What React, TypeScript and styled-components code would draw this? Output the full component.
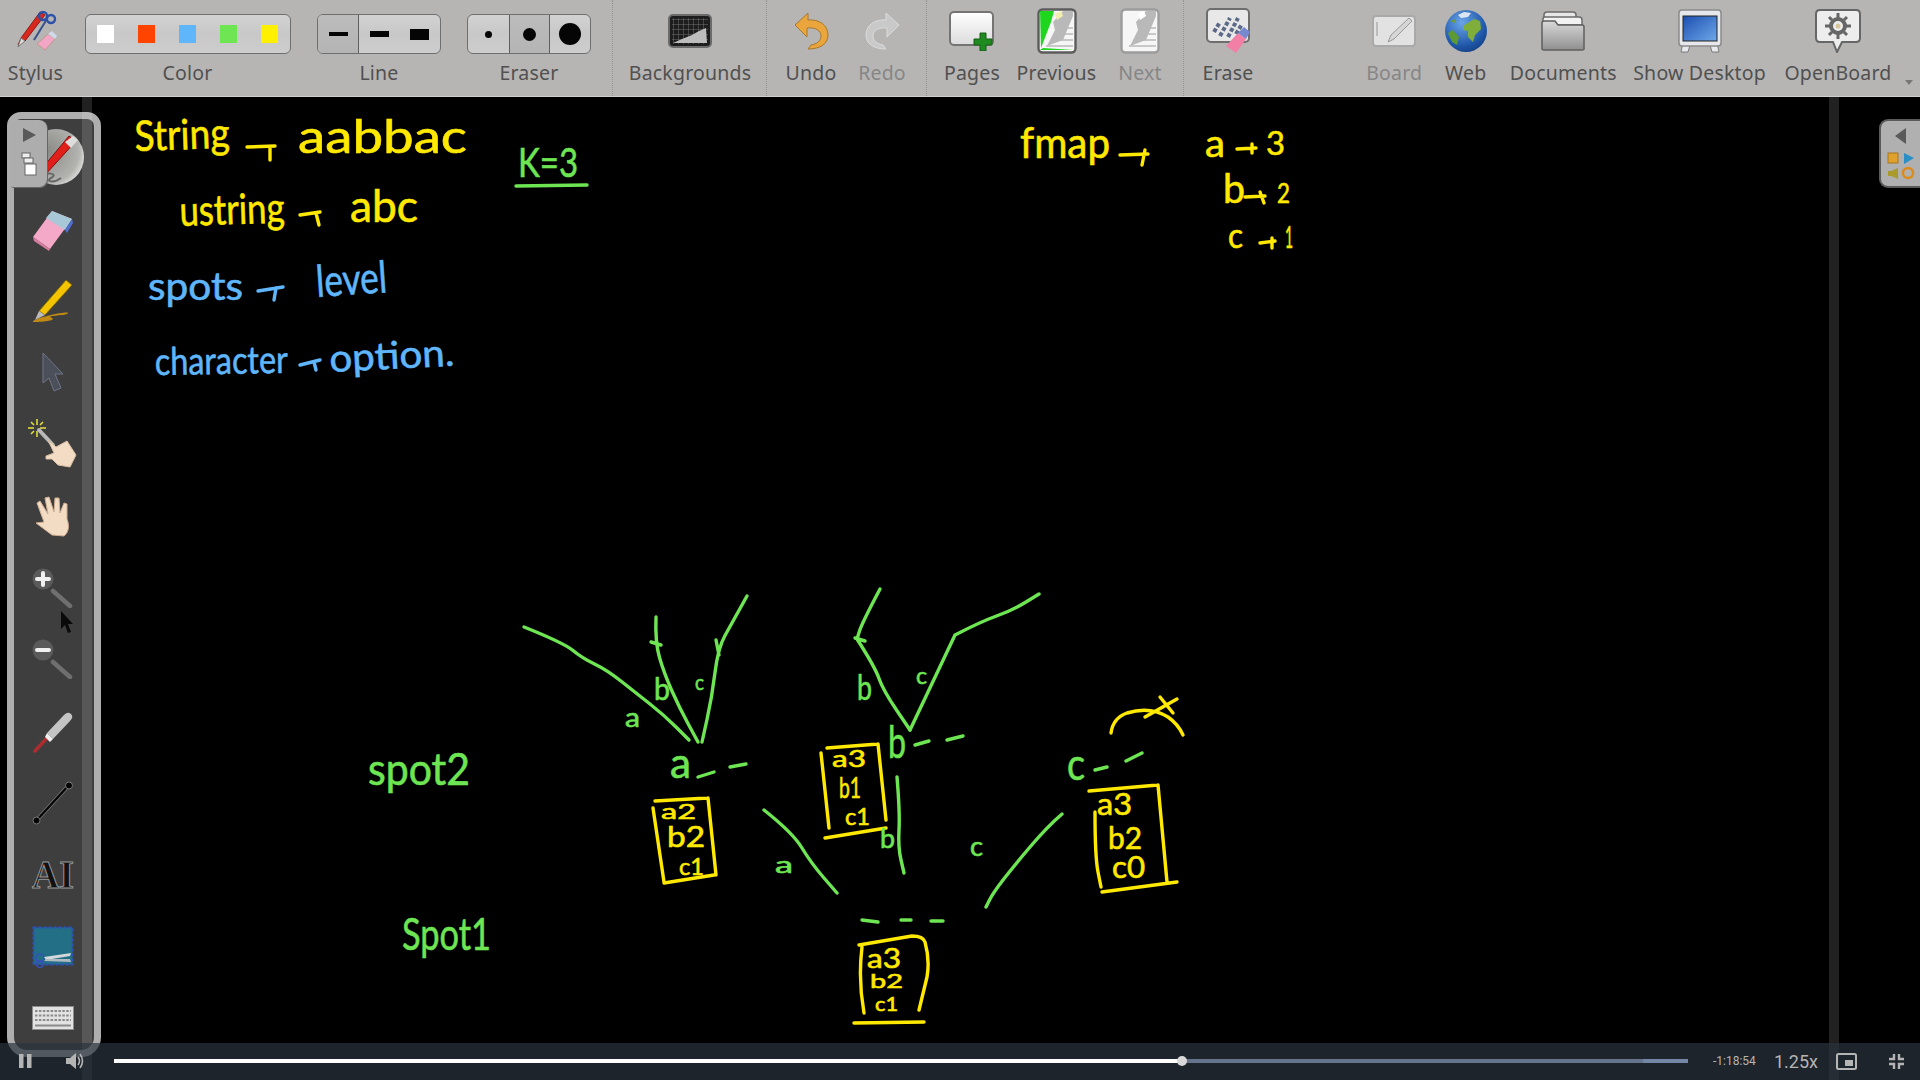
import React from "react";
import styled, { createGlobalStyle } from "styled-components";

const Y = "#ffe900";
const G = "#6ee553";
const B = "#5fb6fb";

const Global = createGlobalStyle`
  html, body { margin: 0; padding: 0; background: #000; overflow: hidden; }
  #root { width: 1920px; height: 1080px; }
`;

const Page = styled.div`
  position: relative;
  width: 1920px;
  height: 1080px;
  display: flex;
  flex-direction: column;
  background: #000;
  overflow: hidden;
  font-family: "Noto Sans", "Open Sans", sans-serif;
`;

/* ---------- toolbar ---------- */
const Toolbar = styled.header`
  position: relative;
  flex: 0 0 97px;
  box-sizing: border-box;
  height: 97px;
  display: flex;
  align-items: flex-start;
  background: #b6b5b4;
  border-bottom: 1px solid #cfcfcf;
`;
const Tool = styled.div<{ $w: number; $ml?: number }>`
  flex: 0 0 ${(p) => p.$w}px;
  margin-left: ${(p) => p.$ml ?? 0}px;
  display: flex;
  flex-direction: column;
  align-items: center;
`;
const IconSlot = styled.div`
  height: 62px;
  display: flex;
  align-items: center;
  justify-content: center;
`;
const Mirror = styled.span`
  display: flex;
  transform: scaleX(-1);
`;
const Label = styled.span<{ $off?: boolean }>`
  height: 22px;
  line-height: 22px;
  font-size: 19.5px;
  letter-spacing: 0.2px;
  white-space: nowrap;
  color: ${(p) => (p.$off ? "#868686" : "#505050")};
`;
const Sep = styled.div<{ $ml?: number }>`
  flex: 0 0 1px;
  height: 96px;
  margin-left: ${(p) => p.$ml ?? 0}px;
  border-left: 1px dotted #959595;
`;
const Spacer = styled.div<{ $w?: number }>`
  flex: ${(p) => (p.$w ? `0 0 ${p.$w}px` : "1")};
`;
const Group = styled.div`
  box-sizing: border-box;
  width: 100%;
  height: 40px;
  margin-top: 14px;
  margin-bottom: 8px;
  display: flex;
  border: 1.5px solid #6f6f6f;
  border-radius: 6px;
  overflow: hidden;
  background: linear-gradient(#d2d2d2, #c8c8c8 50%, #cdcdcd);
`;
const ColorCell = styled.div`
  flex: 1;
  display: flex;
  align-items: center;
  justify-content: center;
`;
const Swatch = styled.span<{ $c: string }>`
  width: 17px;
  height: 18px;
  background: ${(p) => p.$c};
`;
const Seg = styled.div<{ $w: number; $on?: boolean; $div?: boolean }>`
  flex: 0 0 ${(p) => p.$w}px;
  display: flex;
  align-items: center;
  justify-content: center;
  box-sizing: border-box;
  background: ${(p) => (p.$on ? "linear-gradient(#bcbcbc,#b4b4b4)" : "transparent")};
  border-left: ${(p) => (p.$div ? "1.5px solid #5f5f5f" : "none")};
`;
const LineMark = styled.span<{ $h: number }>`
  width: 19px;
  height: ${(p) => p.$h}px;
  background: #050505;
`;
const Dot = styled.span<{ $d: number }>`
  width: ${(p) => p.$d}px;
  height: ${(p) => p.$d}px;
  border-radius: 50%;
  background: #050505;
`;
const MoreArrow = styled.span`
  position: absolute;
  right: 7px;
  top: 80px;
  width: 0;
  height: 0;
  border-left: 4px solid transparent;
  border-right: 4px solid transparent;
  border-top: 5px solid #777;
`;

/* ---------- stage ---------- */
const Stage = styled.main`
  position: relative;
  flex: 1;
  display: flex;
  justify-content: space-between;
  align-items: flex-start;
`;
const Board = styled.svg`
  position: absolute;
  inset: 0;
  width: 1920px;
  height: 983px;
`;
const Stroke = styled.path<{ $c: string }>`
  fill: none;
  stroke: ${(p) => p.$c};
  stroke-width: 3.4;
  stroke-linecap: round;
  stroke-linejoin: round;
`;
const Ink = styled.text<{ $c: string; $s: number }>`
  font-family: Lato, "Open Sans", sans-serif;
  font-size: ${(p) => p.$s}px;
  fill: ${(p) => p.$c};
  stroke: ${(p) => p.$c};
  stroke-width: 0.6px;
`;
const Strip = styled.div<{ $x: number }>`
  position: absolute;
  top: 0;
  bottom: 0;
  left: ${(p) => p.$x}px;
  width: 10px;
  background: rgba(255, 255, 255, 0.13);
  pointer-events: none;
  z-index: 3;
`;
const Rail = styled.aside`
  position: relative;
  z-index: 2;
  box-sizing: border-box;
  width: 94px;
  height: 945px;
  margin: 15px 0 0 7px;
  padding-top: 2px;
  display: flex;
  flex-direction: column;
  background: #3e3e3e;
  border: 7px solid #aeaeae;
  border-radius: 14px 14px 20px 20px;
`;
const RailSlot = styled.div<{ $nudge?: number }>`
  flex: 0 0 71.8px;
  display: flex;
  align-items: center;
  justify-content: center;
  padding-right: 2px;
  padding-left: ${(p) => p.$nudge ?? 0}px;
`;
const RailTab = styled.div`
  position: absolute;
  left: -4px;
  top: 1px;
  width: 37px;
  height: 67px;
  display: flex;
  flex-direction: column;
  align-items: center;
  gap: 10px;
  padding-top: 8px;
  box-sizing: border-box;
  background: #adadad;
  border-radius: 3px 8px 8px 3px;
  box-shadow: 1px 1px 0 #666;
`;
const MouseCursor = styled.svg`
  position: absolute;
  left: 46px;
  top: 492px;
`;
const SideTab = styled.div`
  position: relative;
  z-index: 2;
  box-sizing: border-box;
  width: 41px;
  height: 69px;
  margin-top: 22px;
  display: flex;
  flex-direction: column;
  align-items: center;
  gap: 8px;
  padding-top: 7px;
  background: #b0b0b0;
  border: 2px solid #5a5a5a;
  border-right: none;
  border-radius: 9px 0 0 9px;
`;

/* ---------- player ---------- */
const Player = styled.footer`
  position: absolute;
  z-index: 5;
  left: 0;
  right: 0;
  bottom: 0;
  height: 37px;
  display: flex;
  align-items: center;
  padding-bottom: 1px;
  box-sizing: border-box;
  background: rgba(43, 51, 63, 0.7);
  color: #b4b4b4;
  font-family: Roboto, "Liberation Sans", sans-serif;
`;
const PlayerBtn = styled.div<{ $ml: number; $w: number }>`
  flex: 0 0 ${(p) => p.$w}px;
  margin-left: ${(p) => p.$ml}px;
  display: flex;
  align-items: center;
  justify-content: center;
`;
const Track = styled.div`
  position: relative;
  flex: 0 0 1574px;
  margin-left: 29px;
  height: 4px;
  background: #7386a5;
`;
const Buffered = styled.div`
  position: absolute;
  left: 0;
  top: 0;
  bottom: 0;
  width: 1529px;
  background: #65748c;
`;
const Played = styled.div`
  position: absolute;
  left: 0;
  top: 0;
  bottom: 0;
  width: 1068px;
  background: #fff;
`;
const Knob = styled.div`
  position: absolute;
  left: 1063px;
  top: -3px;
  width: 10px;
  height: 10px;
  border-radius: 50%;
  background: #d8d8d8;
`;
const TimeText = styled.span`
  margin-left: 25px;
  width: 46px;
  font-size: 12px;
  white-space: nowrap;
`;
const Speed = styled.span`
  margin-left: 15px;
  width: 46px;
  font-size: 18px;
  white-space: nowrap;
`;

/* ---------- toolbar icons ---------- */
const StylusIcon = () => (
  <svg width="42" height="42" viewBox="0 0 42 42">
    <path d="M3 35 L6 28 L25 2 L30 5 L10 31 Z" fill="#d8281e" stroke="#8f1d18" />
    <path d="M6 28 L10 31 L3 37 Z" fill="#ddd" stroke="#777" />
    <path d="M19 30 L32 9" stroke="#37508a" strokeWidth="2" />
    <circle cx="28" cy="6" r="4" fill="none" stroke="#2b52a8" strokeWidth="2.4" />
    <circle cx="36" cy="9" r="4" fill="none" stroke="#2b52a8" strokeWidth="2.4" />
    <path d="M22 34 L33 24 L40 29 L30 40 Z" fill="#f2a6c6" stroke="#b98" />
    <path d="M33 24 L37 21 L42 26 L40 29 Z" fill="#cfd9ea" />
  </svg>
);
const BackgroundsIcon = () => (
  <svg width="44" height="34" viewBox="0 0 44 34">
    <defs>
      <pattern id="gridp" width="5" height="5" patternUnits="userSpaceOnUse">
        <path d="M5 0H0V5" fill="none" stroke="#777" strokeWidth="0.9" />
      </pattern>
    </defs>
    <rect x="1" y="1" width="42" height="32" rx="4" fill="#1d1d1d" stroke="#6b6b6b" strokeWidth="2" />
    <rect x="4" y="4" width="36" height="26" fill="url(#gridp)" />
    <path d="M5 29 L14 25 L24 21 L31 17 L38 14 L39 29 Z" fill="#bdbdbd" />
  </svg>
);
const UndoArrow = ({ c, e }: { c: string; e: string }) => (
  <svg width="35" height="38" viewBox="0 0 35 38">
    <path
      d="M14 1 L1 13 L13 25 L13 16 C22 15 27 19 27 24 C27 29 23 32 17 33 L14 37 C26 37 34 32 34 23 C34 13 25 7 14 8 Z"
      fill={c}
      stroke={e}
    />
  </svg>
);
const PagesIcon = () => (
  <svg width="46" height="40" viewBox="0 0 46 40">
    <defs>
      <linearGradient id="pg" x1="0" y1="0" x2="0" y2="1">
        <stop offset="0" stopColor="#fff" />
        <stop offset="1" stopColor="#dcdcdc" />
      </linearGradient>
    </defs>
    <rect x="1" y="1" width="43" height="33" rx="4" fill="url(#pg)" stroke="#747474" strokeWidth="2" />
    <path d="M31 22h6v6h6v6h-6v6h-6v-6h-6v-6h6z" fill="#1f8a1f" stroke="#155f15" />
  </svg>
);
const PageFlip = ({ green }: { green?: boolean }) => (
  <svg width="40" height="46" viewBox="0 0 40 46">
    <rect x="1.5" y="1.5" width="37" height="43" rx="4" fill="#f6f6f6" stroke={green ? "#5c5c5c" : "#9c9c9c"} strokeWidth="2.4" />
    {green && <path d="M3 3 H17 L14 14 L4 40 Z" fill="#1ed61e" />}
    {green && <path d="M3 42 L6 40 L36 42 Z" fill="#1ed61e" />}
    <path d="M26 3 H36 V8 L26 32 L10 38 L18 22 L16 14 Z" fill="#b9b9b9" />
    <path d="M18 6 L24 3 L26 8 L20 12 Z" fill={green ? "#f2edb0" : "#fff"} />
    <path d="M22 20H36M18 26H36M14 32H36M9 38H36" stroke="#b9b9b9" strokeWidth="1.6" />
  </svg>
);
const EraseIcon = () => (
  <svg width="44" height="46" viewBox="0 0 44 46">
    <rect x="1" y="1" width="42" height="33" rx="4" fill="#e8e8e8" stroke="#6e6e6e" strokeWidth="2" />
    <path d="M8 24L14 14M14 28L24 10M22 29L32 10M30 26L36 16" stroke="#5c6a88" strokeWidth="4" strokeDasharray="4 2" />
    <path d="M20 38 L32 25 L40 31 L30 45 Z" fill="#f27fa6" />
    <path d="M32 25 L38 19 L44 24 L40 31 Z" fill="#7588d0" />
  </svg>
);
const BoardIcon = () => (
  <svg width="44" height="32" viewBox="0 0 44 32">
    <rect x="1" y="1" width="42" height="30" rx="3" fill="#e2e2e2" stroke="#a9a9a9" strokeWidth="2" />
    <path d="M5 7V21" stroke="#bcbcbc" strokeWidth="2" />
    <path d="M16 27 L19 20 L37 3 L40 6 L22 24 Z" fill="#d6d6d6" stroke="#9a9a9a" />
  </svg>
);
const GlobeIcon = () => (
  <svg width="44" height="44" viewBox="0 0 44 44">
    <defs>
      <radialGradient id="gl" cx="0.4" cy="0.3" r="0.8">
        <stop offset="0" stopColor="#6aa5e8" />
        <stop offset="0.7" stopColor="#1f56a8" />
        <stop offset="1" stopColor="#123a78" />
      </radialGradient>
    </defs>
    <circle cx="22" cy="22" r="21" fill="url(#gl)" />
    <path d="M19 17 L30 10 L36 12 L37 20 L31 26 L29 33 L24 28 L24 22 L19 21 Z" fill="#7fae3a" />
    <path d="M4 24 L9 21 L15 28 L13 36 L8 33 Z" fill="#5d9a34" />
    <path d="M14 6 L20 3 L27 4 L24 8 L17 9 Z" fill="#dce6f2" />
    <path d="M6 12 L12 10 L11 14 Z" fill="#6a9e3a" />
  </svg>
);
const FolderIcon = () => (
  <svg width="44" height="40" viewBox="0 0 44 40">
    <defs>
      <linearGradient id="fo" x1="0" y1="0" x2="0" y2="1">
        <stop offset="0" stopColor="#d9d9d9" />
        <stop offset="1" stopColor="#8f8f8f" />
      </linearGradient>
    </defs>
    <path d="M3 38 V4 Q3 1 6 1 H32 Q35 1 35 4 V8 H3" fill="#e6e6e6" stroke="#6b6b6b" strokeWidth="1.5" />
    <path d="M2 38 V8 Q2 6 4 6 H38 Q41 6 41 9 V14 H2" fill="#f2f2f2" stroke="#6b6b6b" strokeWidth="1.5" />
    <path d="M1 38 V12 Q1 10 3 10 H14 L17 14 H41 Q43 14 43 16 V38 Q43 39 41 39 H3 Q1 39 1 38 Z" fill="url(#fo)" stroke="#5f5f5f" strokeWidth="1.5" />
  </svg>
);
const DesktopIcon = () => (
  <svg width="44" height="44" viewBox="0 0 44 44">
    <defs>
      <linearGradient id="sc" x1="0" y1="0" x2="1" y2="1">
        <stop offset="0" stopColor="#1c4fb0" />
        <stop offset="1" stopColor="#6fa8ea" />
      </linearGradient>
    </defs>
    <path d="M5 34 L3 43 H10 L12 36 H32 L34 43 H41 L39 34 Z" fill="#e8eaee" stroke="#7b7b7b" />
    <rect x="1" y="1" width="42" height="36" rx="3" fill="#e6e8ec" stroke="#8a8a8a" strokeWidth="1.5" />
    <rect x="5" y="7" width="34" height="25" fill="url(#sc)" stroke="#222" />
  </svg>
);
const BubbleIcon = () => (
  <svg width="46" height="44" viewBox="0 0 46 44">
    <path d="M5 1 H41 Q45 1 45 5 V29 Q45 33 41 33 H27 L22 43 L18 33 H5 Q1 33 1 29 V5 Q1 1 5 1 Z" fill="#ededed" stroke="#666" strokeWidth="2" />
    <circle cx="23" cy="17" r="7" fill="none" stroke="#666" strokeWidth="4" />
    <path d="M23 4V9M23 25V30M10 17H15M31 17H36M14 8L17 11M32 8L29 11M14 26L17 23M32 26L29 23" stroke="#666" strokeWidth="3" />
    <circle cx="23" cy="17" r="2.5" fill="#d8c79a" />
  </svg>
);

/* ---------- rail icons ---------- */
const PenIcon = () => (
  <svg width="58" height="58" viewBox="0 0 58 58">
    <defs>
      <radialGradient id="pc" cx="0.35" cy="0.4" r="0.7">
        <stop offset="0" stopColor="#8a8a86" />
        <stop offset="0.8" stopColor="#b3b3af" />
        <stop offset="1" stopColor="#e0e0e0" />
      </radialGradient>
    </defs>
    <circle cx="29" cy="29" r="28" fill="url(#pc)" />
    <path d="M12 44 L42 8 L49 13 L18 47 Z" fill="#e01e1a" stroke="#7c120f" />
    <path d="M38 14 L46 8 L51 12 L44 20 Z" fill="#ddd" />
    <path d="M12 44 L18 47 L9 51 Z" fill="#ddd" />
    <path d="M11 51 C20 42 32 46 24 50 C18 53 26 56 34 50" fill="none" stroke="#666" strokeWidth="2" />
  </svg>
);
const EraserIcon = () => (
  <svg width="42" height="44" viewBox="0 0 42 44">
    <path d="M1 30 L20 4 L40 12 L18 42 Z" fill="#f5a9c8" />
    <path d="M14 11 L20 4 L40 12 L33 23 Z" fill="#a8c8d8" />
    <path d="M33 23 L40 12 L41 16 L35 26 Z" fill="#4f6ed0" />
    <path d="M1 30 L18 42 L17 44 L2 34 Z" fill="#d77da0" />
  </svg>
);
const HighlighterIcon = () => (
  <svg width="42" height="46" viewBox="0 0 42 46">
    <path d="M7 34 L34 3 L40 8 L13 38 Z" fill="#f4c400" stroke="#7c6400" />
    <path d="M7 34 L13 38 L3 43 Z" fill="#bbb" />
    <path d="M1 44 C10 39 36 34 36 36 C36 39 12 38 20 41 C24 43 14 45 1 45 Z" fill="#c08a14" />
  </svg>
);
const PointerIcon = () => (
  <svg width="24" height="40" viewBox="0 0 24 40">
    <path d="M2 1 L22 22 L14 22 L20 36 L13 39 L8 26 L2 31 Z" fill="#4b4f5a" stroke="#6f7488" strokeWidth="1" />
  </svg>
);
const LaserHandIcon = () => (
  <svg width="54" height="54" viewBox="0 0 54 54">
    <path d="M11 2V8M11 14V20M2 11H8M14 11H20M5 5L8 8M14 14L17 17M17 5L14 8M5 17L8 14" stroke="#e6e23c" strokeWidth="1.5" />
    <path d="M13 13 L27 28" stroke="#b9b9b9" strokeWidth="4" strokeLinecap="round" />
    <path d="M22 23 L30 30 L41 24 L50 38 L44 50 L32 48 L26 42 L20 42 L20 39 L28 36 Z" fill="#f3dcc4" stroke="#d7bda3" />
  </svg>
);
const HandIcon = () => (
  <svg width="38" height="42" viewBox="0 0 38 42">
    <path d="M2 28 L10 27 L3 8 L6 6 L14 19 L11 3 L15 2 L20 17 L21 3 L25 3 L26 18 L30 8 L33 9 L33 24 C36 32 34 38 30 41 L18 40 Z" fill="#f3dcc4" stroke="#cfae92" />
  </svg>
);
const ZoomIcon = ({ plus }: { plus?: boolean }) => (
  <svg width="42" height="40" viewBox="0 0 42 40">
    <circle cx="11" cy="11" r="10.5" fill="#5a5a5a" />
    <path d={plus ? "M5 11H17M11 5V17" : "M5 11H17"} stroke="#f0f0f0" strokeWidth="4" strokeLinecap="round" />
    <path d="M21 23 L38 38" stroke="#6f6f6f" strokeWidth="4.5" strokeLinecap="round" />
  </svg>
);
const LaserIcon = () => (
  <svg width="42" height="44" viewBox="0 0 42 44">
    <path d="M3 42 L14 30" stroke="#c9282c" strokeWidth="3.5" strokeLinecap="round" opacity="0.8" />
    <path d="M15 24 L32 6 Q36 2 39 5 Q42 8 38 12 L21 30 Z" fill="#c4c4c4" />
    <path d="M15 24 L21 30 L18 33 L13 28 Z" fill="#eee" />
  </svg>
);
const LineIcon = () => (
  <svg width="42" height="44" viewBox="0 0 42 44">
    <path d="M4 40 L37 4" stroke="#777" strokeWidth="4" strokeLinecap="round" />
    <path d="M4 40 L37 4" stroke="#050505" strokeWidth="2.4" strokeLinecap="round" />
    <circle cx="4.5" cy="39.5" r="3.5" fill="#050505" stroke="#777" />
    <circle cx="37" cy="4.5" r="3.5" fill="#050505" stroke="#777" />
  </svg>
);
const AiText = styled.text`
  font-family: "Liberation Serif", serif;
  font-size: 40px;
  font-weight: 700;
  fill: #111;
  stroke: #9a9a9a;
  stroke-width: 1px;
`;
const AiIcon = () => (
  <svg width="50" height="44" viewBox="0 0 50 44">
    <AiText x="4" y="35" textLength="42" lengthAdjust="spacingAndGlyphs">AI</AiText>
  </svg>
);
const CaptureIcon = () => (
  <svg width="42" height="42" viewBox="0 0 42 42">
    <rect x="1.5" y="1.5" width="39" height="37" fill="#226f86" stroke="#2b50c0" strokeWidth="2" strokeDasharray="3 2" />
    <circle cx="8" cy="32" r="4" fill="none" stroke="#3750b8" strokeWidth="1.5" />
    <circle cx="8" cy="38" r="3.5" fill="none" stroke="#3750b8" strokeWidth="1.5" />
    <path d="M12 31 L39 27 L38 30 L14 34 Z" fill="#d4d8dc" />
    <path d="M12 35 L39 36 L38 33 L14 33 Z" fill="#aeb8c0" />
  </svg>
);
const KeyboardIcon = () => (
  <svg width="42" height="24" viewBox="0 0 42 24">
    <rect x="0.5" y="0.5" width="41" height="23" fill="#e2e2e2" stroke="#8c8c8c" />
    <path d="M3 5H39M3 9.5H39M3 14H39" stroke="#8a8a8a" strokeWidth="2" strokeDasharray="2.5 1.4" />
    <path d="M3 19.5H39" stroke="#8a8a8a" strokeWidth="2" />
  </svg>
);

/* ---------- board data ---------- */
const smooth = (d: string) =>
  d
    .split("M")
    .filter((s) => s.trim())
    .map((sub) => {
      if (sub.includes("Q")) return "M" + sub;
      const pts = sub.trim().split("L").map((p) => p.trim());
      if (pts.length < 3) return "M" + sub;
      const xy = pts.map((p) => p.split(/\s+/).map(Number));
      let out = `M${pts[0]} `;
      for (let i = 1; i < xy.length - 1; i++) {
        const mx = (xy[i][0] + xy[i + 1][0]) / 2;
        const my = (xy[i][1] + xy[i + 1][1]) / 2;
        out += `Q${xy[i][0]} ${xy[i][1]} ${mx} ${my} `;
      }
      return out + `L${pts[pts.length - 1]} `;
    })
    .join("");

type W = [string, number, number, number, number, string, number?];
const words: W[] = [
  ["String", 135, 151, 95, 42, Y, -2],
  ["aabbac", 298, 153, 169, 46, Y],
  ["ustring", 180, 226, 105, 42, Y, -2],
  ["abc", 350, 222, 68, 44, Y],
  ["K=3", 518, 177, 60, 40, G],
  ["spots", 148, 300, 95, 38, B],
  ["level", 317, 297, 71, 44, B, -4],
  ["character", 155, 375, 133, 38, B, -1],
  ["option.", 330, 372, 125, 38, B, -3],
  ["fmap", 1020, 158, 90, 42, Y],
  ["a", 1205, 157, 20, 38, Y],
  ["3", 1266, 155, 19, 32, Y],
  ["b", 1223, 203, 22, 40, Y],
  ["2", 1277, 203, 13, 26, Y],
  ["c", 1228, 248, 15, 34, Y],
  ["1", 1285, 248, 8, 30, Y],
  ["spot2", 368, 785, 102, 44, G],
  ["Spot1", 402, 950, 89, 44, G],
  ["a", 625, 727, 15, 26, G],
  ["b", 654, 700, 16, 30, G],
  ["c", 695, 690, 9, 22, G],
  ["a", 670, 778, 21, 42, G],
  ["a2", 661, 819, 35, 22, Y],
  ["b2", 667, 847, 38, 28, Y],
  ["c1", 679, 875, 25, 24, Y],
  ["b", 857, 700, 15, 34, G],
  ["c", 916, 684, 11, 24, G],
  ["b", 888, 758, 18, 44, G],
  ["a3", 832, 767, 34, 24, Y],
  ["b1", 839, 798, 22, 28, Y],
  ["c1", 845, 825, 25, 24, Y],
  ["b", 880, 848, 15, 26, G],
  ["a", 775, 873, 18, 24, G],
  ["c", 970, 856, 13, 26, G],
  ["c", 1067, 780, 18, 44, G],
  ["a3", 1097, 815, 35, 30, Y],
  ["b2", 1108, 849, 34, 30, Y],
  ["c0", 1112, 878, 33, 30, Y],
  ["a3", 867, 968, 34, 26, Y],
  ["b2", 870, 988, 33, 20, Y],
  ["c1", 875, 1011, 23, 20, Y],
];
const strokes: [string, string][] = [
  ["M247 147 L275 146 M270 147 L270 160", Y],
  ["M300 215 L320 212 M316 213 L319 225", Y],
  ["M516 186 L587 185", G],
  ["M258 291 L283 287 M276 288 L274 300", B],
  ["M300 365 L320 360 M314 362 L316 370", B],
  ["M1120 155 L1148 154 M1145 150 L1142 165", Y],
  ["M1237 149 L1256 148 M1252 144 L1252 153", Y],
  ["M1245 197 L1265 196 M1260 192 L1264 203", Y],
  ["M1260 243 L1275 241 M1272 238 L1272 248", Y],
  ["M524 627 L564 643 L582 658 L607 670 L636 693 L664 715 L689 740", G],
  ["M656 617 L655 642 L664 673 L679 707 L698 742 M651 642 L661 645", G],
  ["M747 596 L732 623 L718 648 L712 697 L702 742 M716 640 L719 655", G],
  ["M698 777 L714 772 M730 767 L746 764", G],
  ["M655 801 L708 798 M708 798 L716 875 M653 808 L664 882 M664 883 L714 875", Y],
  ["M880 589 L862 623 L857 639 M857 639 L875 667 L883 690 L910 730 M855 638 L865 641", G],
  ["M910 730 L955 635 M955 635 L980 622 L1013 610 L1039 594", G],
  ["M915 745 L929 741 M947 740 L963 736", G],
  ["M821 753 L829 828 M827 748 L878 744 M878 744 L886 820 M825 838 L886 828", Y],
  ["M897 777 L900 813 L898 847 L904 873", G],
  ["M764 810 L793 833 L811 863 L837 893", G],
  ["M1062 814 L1047 827 L1013 867 L993 893 L986 907", G],
  ["M862 920 L878 922 M901 920 L911 920 M931 921 L943 921", G],
  ["M859 945 L912 936 Q923 936 925 942 Q930 960 927 977 L919 1010 M862 947 Q858 980 864 1013 M854 1023 L924 1022", Y],
  ["M1089 791 L1158 785 M1158 785 L1167 882 M1095 812 L1095 857 L1101 887 M1102 892 L1177 882", Y],
  ["M1095 770 L1107 767 M1126 761 L1142 753", G],
  ["M1111 733 Q1113 718 1127 713 Q1150 706 1168 717 Q1178 724 1183 735", Y],
  ["M1160 697 L1173 713 M1177 699 L1145 717", Y],
];

const App = () => (
  <Page>
    <Global />
    <Toolbar>
      <Tool $w={71}>
        <IconSlot><StylusIcon /></IconSlot>
        <Label>Stylus</Label>
      </Tool>
      <Tool $w={206} $ml={13.5}>
        <Group>
          {["#ffffff", "#ff4400", "#5fb6fb", "#6ee553", "#fff000"].map((c) => (
            <ColorCell key={c}><Swatch $c={c} /></ColorCell>
          ))}
        </Group>
        <Label>Color</Label>
      </Tool>
      <Tool $w={124} $ml={26.5}>
        <Group>
          <Seg $w={40} $on><LineMark $h={4} /></Seg>
          <Seg $w={41} $div><LineMark $h={6} /></Seg>
          <Seg $w={40}><LineMark $h={11} /></Seg>
        </Group>
        <Label>Line</Label>
      </Tool>
      <Tool $w={124} $ml={26}>
        <Group>
          <Seg $w={41}><Dot $d={7} /></Seg>
          <Seg $w={40} $on $div><Dot $d={13} /></Seg>
          <Seg $w={40} $div><Dot $d={22} /></Seg>
        </Group>
        <Label>Eraser</Label>
      </Tool>
      <Sep $ml={21} />
      <Tool $w={152}>
        <IconSlot><BackgroundsIcon /></IconSlot>
        <Label>Backgrounds</Label>
      </Tool>
      <Sep />
      <Tool $w={86}>
        <IconSlot><UndoArrow c="#eaa63c" e="#a8782c" /></IconSlot>
        <Label>Undo</Label>
      </Tool>
      <Tool $w={56}>
        <IconSlot>
          <Mirror>
            <UndoArrow c="#c9c9c9" e="#dcdcdc" />
          </Mirror>
        </IconSlot>
        <Label $off>Redo</Label>
      </Tool>
      <Sep $ml={16} />
      <Tool $w={88}>
        <IconSlot><PagesIcon /></IconSlot>
        <Label>Pages</Label>
      </Tool>
      <Tool $w={81}>
        <IconSlot><PageFlip green /></IconSlot>
        <Label>Previous</Label>
      </Tool>
      <Tool $w={86}>
        <IconSlot><PageFlip /></IconSlot>
        <Label $off>Next</Label>
      </Tool>
      <Sep />
      <Tool $w={86}>
        <IconSlot><EraseIcon /></IconSlot>
        <Label>Erase</Label>
      </Tool>
      <Spacer />
      <Tool $w={88}>
        <IconSlot><BoardIcon /></IconSlot>
        <Label $off>Board</Label>
      </Tool>
      <Tool $w={55}>
        <IconSlot><GlobeIcon /></IconSlot>
        <Label>Web</Label>
      </Tool>
      <Tool $w={140}>
        <IconSlot><FolderIcon /></IconSlot>
        <Label>Documents</Label>
      </Tool>
      <Tool $w={131}>
        <IconSlot><DesktopIcon /></IconSlot>
        <Label>Show Desktop</Label>
      </Tool>
      <Tool $w={144}>
        <IconSlot><BubbleIcon /></IconSlot>
        <Label>OpenBoard</Label>
      </Tool>
      <Spacer $w={10} />
      <MoreArrow />
    </Toolbar>
    <Stage>
      <Board viewBox="0 97 1920 983">
        {strokes.map(([d, c], i) => (
          <Stroke key={i} d={smooth(d)} $c={c} />
        ))}
        {words.map(([t, x, y, w, s, c, r], i) => (
          <Ink
            key={i}
            x={x}
            y={y}
            $s={s}
            $c={c}
            textLength={w}
            lengthAdjust="spacingAndGlyphs"
            transform={r ? `rotate(${r} ${x} ${y})` : undefined}
          >
            {t}
          </Ink>
        ))}
      </Board>
      <Strip $x={82} />
      <Strip $x={1829} />
      <Rail>
        <RailSlot $nudge={6}><PenIcon /></RailSlot>
        <RailSlot><EraserIcon /></RailSlot>
        <RailSlot><HighlighterIcon /></RailSlot>
        <RailSlot><PointerIcon /></RailSlot>
        <RailSlot><LaserHandIcon /></RailSlot>
        <RailSlot><HandIcon /></RailSlot>
        <RailSlot><ZoomIcon plus /></RailSlot>
        <RailSlot><ZoomIcon /></RailSlot>
        <RailSlot><LaserIcon /></RailSlot>
        <RailSlot><LineIcon /></RailSlot>
        <RailSlot><AiIcon /></RailSlot>
        <RailSlot><CaptureIcon /></RailSlot>
        <RailSlot><KeyboardIcon /></RailSlot>
        <RailTab>
          <svg width="16" height="14" viewBox="0 0 16 14"><path d="M2 0 L15 7 L2 14 Z" fill="#5a5a5a" /></svg>
          <svg width="16" height="24" viewBox="0 0 16 24">
            <rect x="1" y="1" width="8" height="5" fill="#eee" stroke="#666" />
            <rect x="3" y="6" width="9" height="5" fill="#eee" stroke="#666" />
            <rect x="4" y="12" width="11" height="11" fill="#fff" stroke="#666" />
          </svg>
        </RailTab>
        <MouseCursor width="14" height="22" viewBox="0 0 14 22">
          <path d="M1 0 L13 13 L8 13 L11 21 L8 22 L5 14 L1 18 Z" fill="#0a0a0a" />
        </MouseCursor>
      </Rail>
      <SideTab>
        <svg width="14" height="16" viewBox="0 0 14 16"><path d="M12 0 L1 8 L12 16 Z" fill="#5a5a5a" /></svg>
        <svg width="28" height="28" viewBox="0 0 28 28">
          <rect x="1" y="1" width="10" height="10" fill="#e0a12c" stroke="#a7761c" />
          <path d="M17 1 L27 6 L17 12 Z" fill="#2a8fc4" />
          <path d="M11 16 L4 19 H1 V24 H4 L11 27 Z" fill="#a89a2c" />
          <circle cx="21" cy="21" r="5" fill="none" stroke="#dd8a1c" strokeWidth="2.5" />
        </svg>
      </SideTab>
    </Stage>
    <Player>
      <PlayerBtn $ml={19} $w={13}>
        <svg width="13" height="14" viewBox="0 0 13 14">
          <path d="M0 0H4.5V14H0ZM8 0H12.5V14H8Z" fill="#b4b4b4" />
        </svg>
      </PlayerBtn>
      <PlayerBtn $ml={34} $w={19}>
        <svg width="19" height="18" viewBox="0 0 19 18">
          <path d="M0 6H4L10 1V17L4 12H0Z" fill="#b4b4b4" />
          <path d="M12 5Q15 9 12 13M14 2Q19 9 14 16" fill="none" stroke="#b4b4b4" strokeWidth="1.6" />
        </svg>
      </PlayerBtn>
      <Track>
        <Buffered />
        <Played />
        <Knob />
      </Track>
      <TimeText>-1:18:54</TimeText>
      <Speed>1.25x</Speed>
      <PlayerBtn $ml={16} $w={21}>
        <svg width="21" height="17" viewBox="0 0 21 17">
          <rect x="1" y="1" width="19" height="15" rx="1.5" fill="none" stroke="#b4b4b4" strokeWidth="2" />
          <rect x="9" y="7" width="8" height="6" fill="#b4b4b4" />
        </svg>
      </PlayerBtn>
      <PlayerBtn $ml={32} $w={15}>
        <svg width="15" height="15" viewBox="0 0 15 15">
          <path d="M5 0V5H0M10 0V5H15M5 15V10H0M10 15V10H15" fill="none" stroke="#b4b4b4" strokeWidth="2.4" />
        </svg>
      </PlayerBtn>
    </Player>
  </Page>
);

export default App;
